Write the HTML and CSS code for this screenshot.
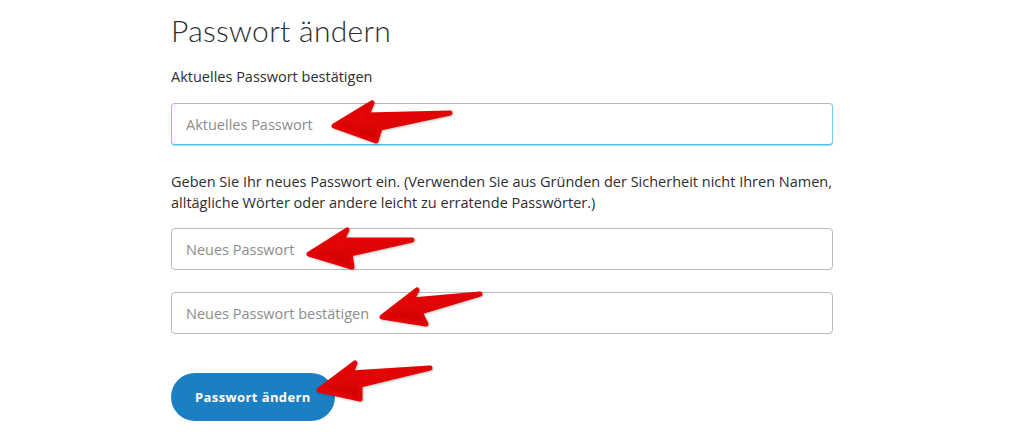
FILE: index.html
```html
<!DOCTYPE html>
<html lang="de">
<head>
    <meta charset="UTF-8">
    <meta name="viewport" content="width=device-width, initial-scale=1.0">
    <title>Passwort ändern</title>
    <link rel="stylesheet" href="styles.css">
</head>
<body>
    <div id="page">
        <h1 id="title">Passwort ändern</h1>
        <div class="label">Aktuelles Passwort bestätigen</div>
        <input type="password" class="field focused" placeholder="Aktuelles Passwort">
        <p class="hint">Geben Sie Ihr neues Passwort ein. (Verwenden Sie aus Gründen der Sicherheit nicht Ihren Namen, alltägliche Wörter oder andere leicht zu erratende Passwörter.)</p>
        <input type="password" class="field field-new" placeholder="Neues Passwort">
        <input type="password" class="field field-confirm" placeholder="Neues Passwort bestätigen">
        <button class="submit">Passwort ändern</button>
    </div>
    <svg id="arrows" width="1030" height="438" viewBox="0 0 1030 438">
        <defs>
            <linearGradient id="red" x1="0" y1="0" x2="0" y2="1">
                <stop offset="0" stop-color="#f00a0a"/>
                <stop offset="1" stop-color="#cc0000"/>
            </linearGradient>
        </defs>
        <polygon class="arrow" points="334,126 372,103 367,115 450,113 380,128 376,141"/>
        <polygon class="arrow" points="309,254 347,230 342,240 412,240 350,254 352,267"/>
        <polygon class="arrow" points="382,317 417,290 412,300 480,294 420,312 426,324"/>
        <polygon class="arrow" points="319,390 355,363 351,373 430,368 360,385 360,399"/>
    </svg>
</body>
</html>
```

FILE: styles.css
```css
body {
    margin: 0;
    padding: 0;
    background-color: #ffffff;
    font-family: 'Open Sans', 'Lato', sans-serif;
    color: #2c2e2f;
}
#page {
    display: flex;
    flex-direction: column;
    align-items: flex-start;
    width: 662px;
    padding: 10px 0 0 171px;
}
#title {
    margin: 0;
    font-family: 'Lato', sans-serif;
    font-size: 30px;
    font-weight: 300;
    line-height: 40px;
    letter-spacing: 0.3px;
}
.label {
    margin-top: 17px;
    font-size: 14.5px;
    line-height: 20px;
}
.field {
    box-sizing: border-box;
    width: 662px;
    height: 42px;
    margin: 16px 0 0;
    padding: 0 14px;
    font-family: inherit;
    font-size: 14.5px;
    color: #2c2e2f;
    background: #fff;
    border: 1px solid #b9bcbf;
    border-radius: 4px;
    outline: none;
}
.field::placeholder {
    color: #8c8c8c;
}
.focused {
    border-color: #b4b8bb #6cd0ea #4fc4e6 #6cd0ea;
    box-shadow: 0 1px 0 #9ddff0;
}
.hint {
    margin: 26px 0 0;
    font-size: 14.5px;
    line-height: 21px;
}
.field-new {
    margin-top: 15px;
}
.field-confirm {
    margin-top: 22px;
}
.submit {
    margin-top: 39px;
    height: 48px;
    padding: 0 24px;
    font-family: inherit;
    font-size: 13px;
    font-weight: 700;
    letter-spacing: 0.4px;
    color: #ffffff;
    background-color: #1a7fc3;
    border: none;
    border-radius: 24px;
    cursor: pointer;
}
#arrows {
    position: absolute;
    top: 0;
    left: 0;
    pointer-events: none;
}
.arrow {
    fill: url(#red);
    stroke: #e00404;
    stroke-width: 5;
    stroke-linejoin: round;
    filter: drop-shadow(1px 1px 1px rgba(0, 0, 0, 0.25));
}
```
